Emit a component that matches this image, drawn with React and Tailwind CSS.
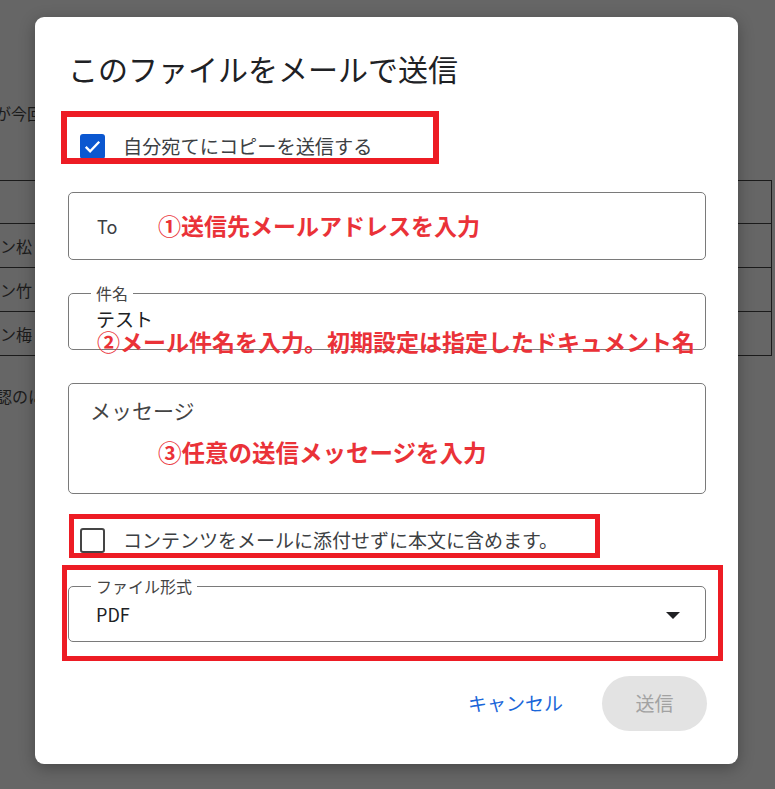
import React from "react";

const FONT = { fontFamily: '"Noto Sans CJK JP", "Noto Sans", sans-serif' };

function Field({ height, legend, children }) {
  return (
    <div
      className="relative w-[638px] rounded-[5px] border border-[#7a7a7a]"
      style={{ height }}
    >
      {legend && (
        <span className="absolute -top-[12px] left-[22px] bg-white px-[5px] text-[16px] leading-[22px] text-[#444]">
          {legend}
        </span>
      )}
      {children}
    </div>
  );
}

function Annotation({ className, children }) {
  return (
    <div className={"pointer-events-none absolute whitespace-nowrap font-bold leading-[30px] text-[#ea3238] " + className}>
      {children}
    </div>
  );
}

export default function App() {
  return (
    <div className="relative h-[789px] w-[775px] overflow-hidden bg-[#666666]" style={FONT}>
      {/* page behind the overlay */}
      <div className="text-[16px] text-[#1b1b1b]">
        <p className="-ml-[5px] pt-[101px] leading-[24px] whitespace-nowrap">が今回のファイルです</p>
        <table className="mt-[55px] w-[772px] border-collapse">
          <tbody>
            <tr className="h-[43px] border-y border-[#1b1b1b]">
              <td className="border-r border-[#1b1b1b]"></td>
            </tr>
            {["ン松", "ン竹", "ン梅"].map((t) => (
              <tr key={t} className="h-[44px] border-y border-[#1b1b1b]">
                <td className="border-r border-[#1b1b1b] whitespace-nowrap leading-[24px]">{t}</td>
              </tr>
            ))}
          </tbody>
        </table>
        <p className="-ml-[4px] mt-[28px] leading-[24px] whitespace-nowrap">認のにご利用ください</p>
      </div>

      {/* dialog */}
      <div className="absolute left-[35px] top-[17px] flex h-[747px] w-[703px] flex-col rounded-[9px] bg-white pl-[33px] pt-[33px] shadow-[0_4px_16px_rgba(0,0,0,0.3)]">
        <h1 className="text-[30px] leading-[36px] text-[#202124]">このファイルをメールで送信</h1>

        <label className="ml-[12px] mt-[48px] flex h-[25px] items-center">
          <span className="flex h-[25px] w-[25px] items-center justify-center rounded-[3px] bg-[#0b57d0]">
            <svg width="19" height="19" viewBox="0 0 24 24" fill="none">
              <path d="M3.5 12.5l5.5 5.5L20.5 6" stroke="white" strokeWidth="3" />
            </svg>
          </span>
          <span className="ml-[18px] text-[19.2px] text-[#3c4043]">自分宛てにコピーを送信する</span>
        </label>

        <div className="mt-[33px]">
          <Field height={68}>
            <span className="absolute left-[28px] top-[21px] text-[18px] leading-[24px] text-[#3c4043]">To</span>
          </Field>
        </div>

        <div className="mt-[33px]">
          <Field height={57} legend="件名">
            <span className="absolute left-[27px] top-[12px] text-[19px] leading-[26px] text-[#202124]">テスト</span>
          </Field>
        </div>

        <div className="mt-[33px]">
          <Field height={111}>
            <span className="absolute left-[21px] top-[11px] text-[21px] leading-[30px] text-[#444]">メッセージ</span>
          </Field>
        </div>

        <label className="ml-[12px] mt-[34px] flex h-[25px] items-center">
          <span className="h-[25px] w-[25px] rounded-[3px] border-[2.5px] border-[#454545]"></span>
          <span className="ml-[18px] text-[19px] text-[#3c4043]">コンテンツをメールに添付せずに本文に含めます。</span>
        </label>

        <div className="mt-[33px]">
          <Field height={56} legend="ファイル形式">
            <span className="absolute left-[27px] top-[15px] text-[18px] leading-[24px] text-[#202124]">PDF</span>
            <svg className="absolute left-[597px] top-[25px]" width="14" height="7" viewBox="0 0 14 7">
              <path d="M0 0h14L7 7z" fill="#202124" />
            </svg>
          </Field>
        </div>

        <div className="mt-[34px] flex w-[639px] items-center justify-end">
          <button type="button" className="mr-[39px] text-[19px] text-[#1a66d9]">キャンセル</button>
          <button
            type="button"
            className="h-[55px] w-[105px] rounded-full bg-[#e3e3e3] text-[19px] text-[#a2a2a2]"
          >
            送信
          </button>
        </div>

        {/* annotations */}
        <div className="pointer-events-none absolute left-[26px] top-[94px] h-[53px] w-[378px] border-[6px] border-[#ed1c24]"></div>
        <div className="pointer-events-none absolute left-[34px] top-[497px] h-[44px] w-[531px] border-[5px] border-[#ed1c24]"></div>
        <div className="pointer-events-none absolute left-[27px] top-[548px] h-[96px] w-[661px] border-[5px] border-[#ed1c24]"></div>

        <Annotation className="left-[123px] top-[193px] text-[23px]">①送信先メールアドレスを入力</Annotation>
        <Annotation className="left-[62px] top-[309px] text-[23px]">②メール件名を入力。初期設定は指定したドキュメント名</Annotation>
        <Annotation className="left-[123px] top-[420px] text-[23.5px]">③任意の送信メッセージを入力</Annotation>
      </div>
    </div>
  );
}
